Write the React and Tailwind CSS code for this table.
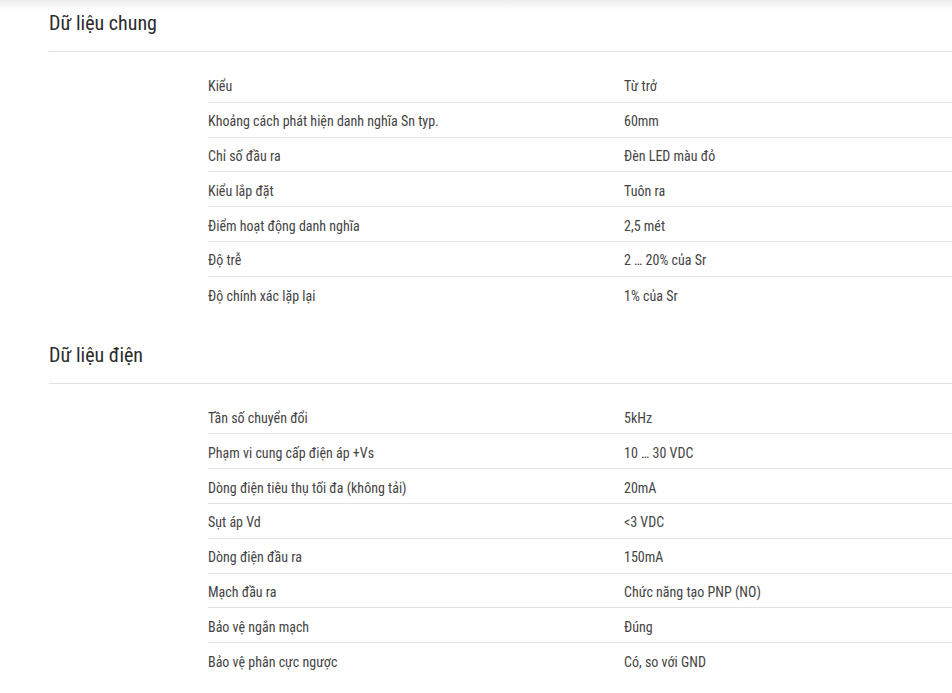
const sections = [
  {
    title: "Dữ liệu chung",
    rows: [
      ["Kiểu", "Từ trở"],
      ["Khoảng cách phát hiện danh nghĩa Sn typ.", "60mm"],
      ["Chỉ số đầu ra", "Đèn LED màu đỏ"],
      ["Kiểu lắp đặt", "Tuôn ra"],
      ["Điểm hoạt động danh nghĩa", "2,5 mét"],
      ["Độ trễ", "2 … 20% của Sr"],
      ["Độ chính xác lặp lại", "1% của Sr"],
    ],
  },
  {
    title: "Dữ liệu điện",
    rows: [
      ["Tần số chuyển đổi", "5kHz"],
      ["Phạm vi cung cấp điện áp +Vs", "10 … 30 VDC"],
      ["Dòng điện tiêu thụ tối đa (không tải)", "20mA"],
      ["Sụt áp Vd", "<3 VDC"],
      ["Dòng điện đầu ra", "150mA"],
      ["Mạch đầu ra", "Chức năng tạo PNP (NO)"],
      ["Bảo vệ ngắn mạch", "Đúng"],
      ["Bảo vệ phân cực ngược", "Có, so với GND"],
    ],
  },
];

const App = () => {
  return (
    <div
      className="min-h-[693px] bg-white font-stretch-condensed"
      style={{ fontFamily: '"Roboto Condensed", Roboto, "Liberation Sans", sans-serif' }}
    >
      <div className="h-[10px] bg-gradient-to-b from-[#ececec] to-white"></div>
      <div className="pl-[49px] flex flex-col gap-[30px]">
        {sections.map((section, i) => (
          <div key={i}>
            <h2 className="text-[20px] leading-[28px] text-[#2b2b2b] pb-[14px] border-b border-[#e3e3e3] -mt-px">
              {section.title}
            </h2>
            <div className="mt-[16px] pl-[159px]">
              {section.rows.map((row, j) => (
                <div
                  key={j}
                  className={`grid grid-cols-[416px_1fr] items-center h-[34.8px] pt-[4px] text-[14px] text-[#444] ${
                    j < section.rows.length - 1 ? "border-b border-[#e3e3e3]" : ""
                  }`}
                >
                  <span>{row[0]}</span>
                  <span>{row[1]}</span>
                </div>
              ))}
            </div>
          </div>
        ))}
      </div>
    </div>
  );
};

export default App;
